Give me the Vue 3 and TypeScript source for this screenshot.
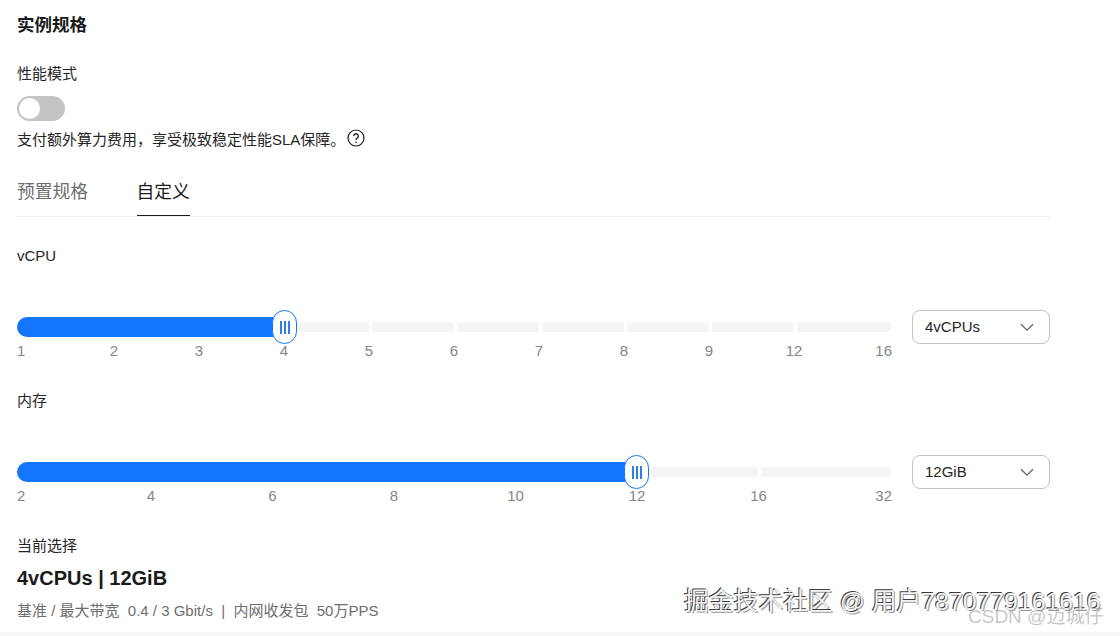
<script setup lang="ts">
interface SliderDef {
  title: string
  value: string
  fill: number
  thumb: number
  segments: number[]
  cells: { label: string; width: number }[]
}

const sliders: SliderDef[] = [
  {
    title: 'vCPU',
    value: '4vCPUs',
    fill: 262,
    thumb: 255,
    segments: [352, 82, 82, 82, 82, 82, 95],
    cells: [
      { label: '1', width: 54.5 },
      { label: '2', width: 85 },
      { label: '3', width: 85 },
      { label: '4', width: 85 },
      { label: '5', width: 85 },
      { label: '6', width: 85 },
      { label: '7', width: 85 },
      { label: '8', width: 85 },
      { label: '9', width: 85 },
      { label: '12', width: 85 },
      { label: '16', width: 55.5 }
    ]
  },
  {
    title: '内存',
    value: '12GiB',
    fill: 610,
    thumb: 607,
    segments: [741, 131],
    cells: [
      { label: '2', width: 73.25 },
      { label: '4', width: 121.5 },
      { label: '6', width: 121.5 },
      { label: '8', width: 121.5 },
      { label: '10', width: 121.5 },
      { label: '12', width: 121.5 },
      { label: '16', width: 121.5 },
      { label: '32', width: 72.75 }
    ]
  }
]
</script>

<template>
  <main class="page">
    <h1 class="title">实例规格</h1>
    <div class="label perf">性能模式</div>
    <div class="toggle"><span class="knob"></span></div>
    <p class="note">
      支付额外算力费用，享受极致稳定性能SLA保障。
      <svg class="help" width="18" height="18" viewBox="0 0 18 18" fill="none" stroke="#1a1a1a">
        <circle cx="9" cy="9" r="8" stroke-width="1.2" />
        <path d="M6.7 7.1a2.3 2.3 0 1 1 3.6 1.9c-.8.5-1.3 1-1.3 2" stroke-width="1.3" />
        <circle cx="9" cy="13.2" r=".8" fill="#1a1a1a" stroke="none" />
      </svg>
    </p>

    <div class="tabs">
      <span class="tab">预置规格</span>
      <span class="tab active">自定义</span>
    </div>

    <section v-for="s in sliders" :key="s.title" class="block">
      <div class="label">{{ s.title }}</div>
      <div class="row">
        <div class="slider">
          <div class="track-wrap">
            <div class="track">
              <span
                v-for="(w, i) in s.segments"
                :key="i"
                class="seg"
                :style="{ width: w + 'px' }"
              ></span>
            </div>
            <div class="fill" :style="{ width: s.fill + 'px' }"></div>
            <div class="thumb" :style="{ left: s.thumb + 'px' }">
              <i></i><i></i><i></i>
            </div>
          </div>
          <div class="ticks">
            <span
              v-for="c in s.cells"
              :key="c.label"
              class="tick"
              :style="{ width: c.width + 'px' }"
            >{{ c.label }}</span>
          </div>
        </div>
        <div class="select">
          <span class="select-text">{{ s.value }}</span>
          <svg width="14" height="9" viewBox="0 0 14 9" fill="none" stroke="#666" stroke-width="1.3">
            <path d="M1 1.2l6 6 6-6" />
          </svg>
        </div>
      </div>
    </section>

    <div class="label current">当前选择</div>
    <div class="summary">4vCPUs | 12GiB</div>
    <div class="spec">基准 / 最大带宽&nbsp; 0.4 / 3 Gbit/s &nbsp;|&nbsp; 内网收发包&nbsp; 50万PPS</div>

    <div class="footer-band"></div>
    <div class="mark-main">掘金技术社区 @ 用户7870779161616</div>
    <div class="mark-csdn">CSDN @迈城仔</div>
  </main>
</template>

<style>
html,
body {
  margin: 0;
  background: #fff;
}
</style>

<style scoped>
.page {
  position: relative;
  width: 1120px;
  height: 636px;
  overflow: hidden;
  box-sizing: border-box;
  padding: 14px 70px 0 17px;
  background: #fff;
  color: #1a1a1a;
  font-family: "Liberation Sans", "Noto Sans CJK SC", sans-serif;
  font-size: 15px;
}
.title {
  margin: 0;
  font-size: 17.5px;
  line-height: 22px;
  font-weight: 700;
}
.label {
  font-size: 15px;
  line-height: 20px;
  color: #252525;
}
.perf {
  margin-top: 28px;
}
.toggle {
  margin-top: 12px;
  width: 48px;
  height: 25px;
  border-radius: 13px;
  background: #c4c4c4;
  position: relative;
}
.knob {
  position: absolute;
  left: 2px;
  top: 2px;
  width: 21px;
  height: 21px;
  border-radius: 50%;
  background: #fff;
}
.note {
  margin: 6px 0 0;
  display: flex;
  align-items: center;
  height: 22px;
  color: #252525;
  white-space: nowrap;
}
.help {
  margin-left: 2px;
}
.tabs {
  margin-top: 22px;
  display: flex;
  gap: 48.5px;
  height: 46px;
  border-bottom: 1px solid #eeeeee;
  box-sizing: border-box;
}
.tab {
  font-size: 17.75px;
  line-height: 26px;
  padding-top: 8px;
  height: 45px;
  box-sizing: border-box;
  color: #6e6e6e;
}
.tab.active {
  color: #1a1a1a;
  border-bottom: 1px solid #1a1a1a;
}
.block {
  height: 145px;
  padding-top: 29px;
  box-sizing: border-box;
}
.row {
  display: flex;
  gap: 20px;
  margin-top: 44px;
}
.slider {
  width: 875px;
}
.track-wrap {
  position: relative;
  height: 34px;
}
.track {
  position: absolute;
  left: 0;
  right: 0;
  top: 12px;
  display: flex;
  gap: 3px;
  height: 10px;
  border-radius: 5px;
  overflow: hidden;
}
.seg {
  flex: none;
  background: #f5f5f5;
}
.fill {
  position: absolute;
  left: 0;
  top: 7px;
  height: 20px;
  border-radius: 10px 0 0 10px;
  background: #1476ff;
}
.thumb {
  position: absolute;
  top: 0;
  box-sizing: border-box;
  width: 25px;
  height: 34px;
  border: 1px solid #1476ff;
  border-radius: 12.5px;
  background: #fff;
  display: flex;
  justify-content: center;
  align-items: center;
  gap: 2px;
}
.thumb i {
  display: block;
  width: 2px;
  height: 13px;
  background: #2f7de8;
}
.ticks {
  display: flex;
  margin-top: -3px;
  height: 20px;
  line-height: 20px;
  color: #868686;
  font-size: 15px;
}
.tick {
  flex: none;
  text-align: center;
}
.tick:first-child {
  text-align: left;
}
.tick:last-child {
  text-align: right;
}
.select {
  flex: none;
  box-sizing: border-box;
  width: 138px;
  height: 34px;
  border: 1px solid #c2c2c2;
  border-radius: 8px;
  padding: 0 15px 0 12px;
  display: flex;
  align-items: center;
  justify-content: space-between;
  font-size: 15px;
  color: #252525;
}
.select-text {
  padding-bottom: 2px;
}
.current {
  margin-top: 29px;
}
.summary {
  margin-top: 9px;
  font-size: 20px;
  line-height: 26px;
  font-weight: 700;
}
.spec {
  margin-top: 10px;
  line-height: 20px;
  color: #6e6e6e;
  white-space: nowrap;
}
.footer-band {
  position: absolute;
  left: 0;
  right: 0;
  bottom: 0;
  height: 4px;
  background: #f7f7f7;
}
.mark-main {
  position: absolute;
  left: 684px;
  top: 587px;
  font-size: 24.8px;
  line-height: 30px;
  color: #f4f4f4;
  text-shadow: -1px -1px 0 #3c3c3c, 1px 1px 0 #999;
  white-space: nowrap;
}
.mark-csdn {
  position: absolute;
  left: 968px;
  top: 605px;
  font-size: 19px;
  line-height: 24px;
  color: rgba(150, 150, 150, 0.55);
  white-space: nowrap;
}
</style>
